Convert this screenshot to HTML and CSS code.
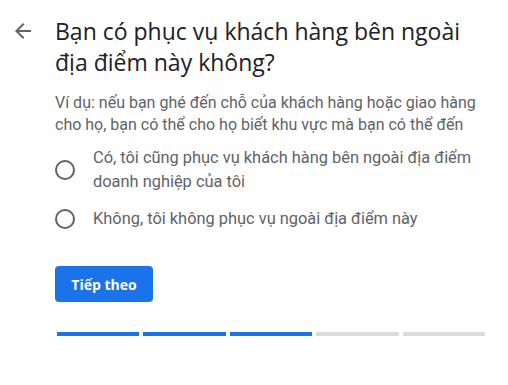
FILE: index.html
```html
<!DOCTYPE html>
<html lang="vi">
<head>
<meta charset="utf-8">
<link rel="stylesheet" href="styles.css">
</head>
<body>
<div class="page">
  <div class="header">
    <button class="back" aria-label="Quay lại">
      <svg width="24" height="24" viewBox="0 0 24 24"><path fill="#5f6368" d="M20 11H7.83l5.59-5.59L12 4l-8 8 8 8 1.41-1.41L7.83 13H20v-2z"/></svg>
    </button>
    <h1 class="title">Bạn có phục vụ khách hàng bên ngoài địa điểm này không?</h1>
  </div>
  <div class="content">
    <p class="desc">Ví dụ: nếu bạn ghé đến chỗ của khách hàng hoặc giao hàng cho họ, bạn có thể cho họ biết khu vực mà bạn có thể đến</p>
    <div class="options">
      <label class="option">
        <span class="radio"></span>
        <span class="opt-text">Có, tôi cũng phục vụ khách hàng bên ngoài địa điểm doanh nghiệp của tôi</span>
      </label>
      <label class="option">
        <span class="radio"></span>
        <span class="opt-text">Không, tôi không phục vụ ngoài địa điểm này</span>
      </label>
    </div>
    <button class="next">Tiếp theo</button>
    <div class="progress">
      <span class="seg on"></span>
      <span class="seg on"></span>
      <span class="seg on"></span>
      <span class="seg"></span>
      <span class="seg"></span>
    </div>
  </div>
</div>
</body>
</html>
```
FILE: styles.css
```css
* { box-sizing: border-box; }
html, body { margin: 0; background: #fff; }
body { font-family: Roboto, "Noto Sans", sans-serif; }
.page { padding: 19px 0 0 11px; width: 508px; }
.header { display: flex; align-items: flex-start; }
.back {
  border: 0; background: none; padding: 0; margin: 0;
  width: 24px; height: 24px;
  display: flex;
}
.title {
  margin: -3px 0 0 20px;
  font-family: "Open Sans", Roboto, sans-serif;
  font-weight: 400;
  font-size: 23px;
  line-height: 31px;
  color: #202124;
  width: 430px;
}
.content { padding-left: 44px; }
.desc {
  margin: 14px 0 0;
  font-size: 16px;
  line-height: 22px;
  color: #5f6368;
  width: 440px;
}
.options { margin-top: 10px; display: flex; flex-direction: column; gap: 13px; }
.option { display: flex; align-items: center; gap: 18px; }
.radio {
  flex: none;
  width: 20px; height: 20px;
  border: 2px solid #5f6368;
  border-radius: 50%;
}
.opt-text {
  font-size: 16.4px;
  line-height: 24px;
  color: #5f6368;
  width: 400px;
}
.next {
  display: block;
  margin-top: 35px;
  background: #1a73e8;
  color: #fff;
  border: 0;
  border-radius: 4px;
  width: 98px; height: 36px;
  font-family: "Open Sans", Roboto, sans-serif;
  font-weight: 700;
  font-size: 14px;
  padding: 0;
}
.progress {
  margin-top: 30px;
  margin-left: 2px;
  display: flex;
  gap: 4px;
  width: 428px;
}
.seg { flex: 1; height: 4px; background: #dadce0; }
.seg.on { background: #1a73e8; }
```
